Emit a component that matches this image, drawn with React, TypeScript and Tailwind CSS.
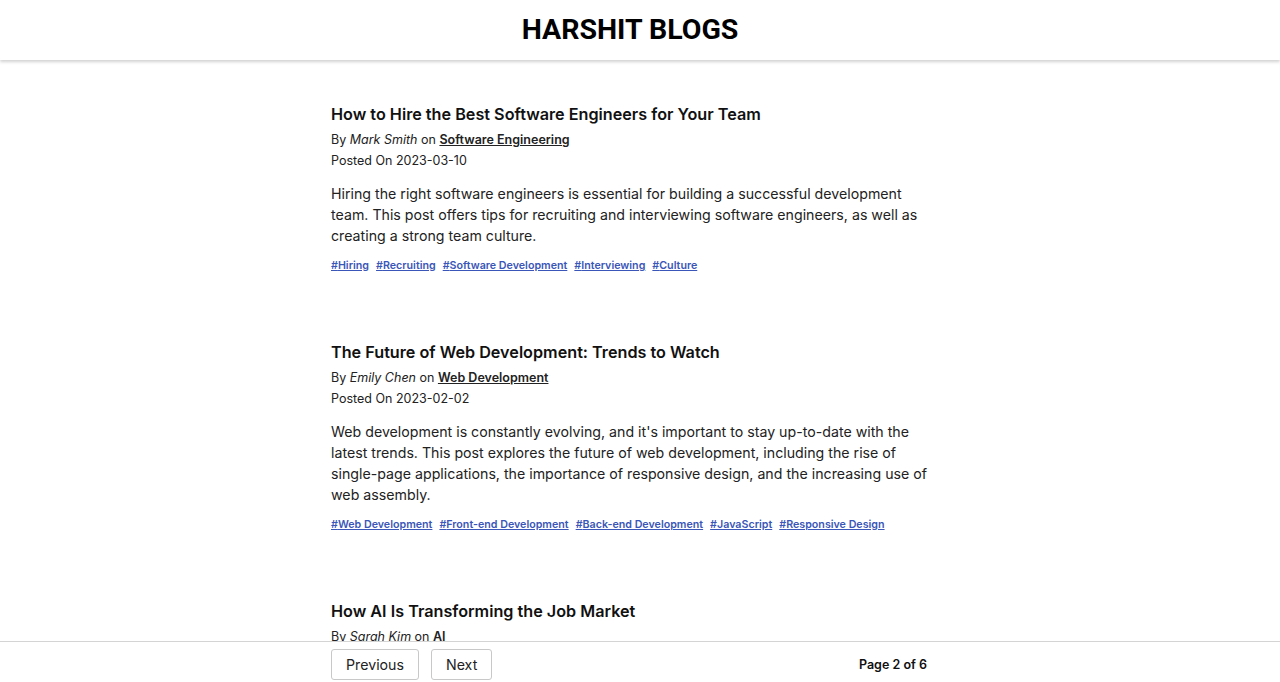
import React from 'react';

interface Post {
  title: string;
  author: string;
  category: string;
  date: string;
  body: string;
  tags: string[];
}

const posts: Post[] = [
  {
    title: 'How to Hire the Best Software Engineers for Your Team',
    author: 'Mark Smith',
    category: 'Software Engineering',
    date: '2023-03-10',
    body: 'Hiring the right software engineers is essential for building a successful development team. This post offers tips for recruiting and interviewing software engineers, as well as creating a strong team culture.',
    tags: ['Hiring', 'Recruiting', 'Software Development', 'Interviewing', 'Culture'],
  },
  {
    title: 'The Future of Web Development: Trends to Watch',
    author: 'Emily Chen',
    category: 'Web Development',
    date: '2023-02-02',
    body: "Web development is constantly evolving, and it's important to stay up-to-date with the latest trends. This post explores the future of web development, including the rise of single-page applications, the importance of responsive design, and the increasing use of web assembly.",
    tags: ['Web Development', 'Front-end Development', 'Back-end Development', 'JavaScript', 'Responsive Design'],
  },
  {
    title: 'How AI Is Transforming the Job Market',
    author: 'Sarah Kim',
    category: 'AI',
    date: '2023-01-15',
    body: 'Artificial intelligence is changing the way we work. This post looks at the jobs most affected by automation and the new roles that are emerging as a result.',
    tags: ['AI', 'Jobs', 'Automation', 'Future of Work'],
  },
];

function PostCard({ post }: { post: Post }) {
  return (
    <article className="mb-[66px]">
      <h2 className="text-[16.2px] leading-[24px] font-semibold text-[#111]">{post.title}</h2>
      <p className="mt-[3px] text-[12.5px] leading-[21px] text-[#222]">
        By <em className="italic">{post.author}</em> on{' '}
        <a href="#" className="font-semibold underline">{post.category}</a>
      </p>
      <p className="text-[12.5px] leading-[21px] text-[#222]">Posted On {post.date}</p>
      <p className="mt-[12px] text-[14.2px] leading-[21px] text-[#222]">{post.body}</p>
      <div className="mt-[12px] flex flex-wrap gap-x-[7px] text-[10.7px] leading-[16px] font-semibold">
        {post.tags.map((tag) => (
          <a key={tag} href="#" className="text-[#3a56b8] underline">#{tag}</a>
        ))}
      </div>
    </article>
  );
}

export default function App() {
  return (
    <div className="h-[682px] flex flex-col bg-white" style={{ fontFamily: 'Inter, "Noto Sans", sans-serif' }}>
      <header className="relative z-10 h-[60px] shrink-0 bg-white shadow-[0_2px_3px_rgba(0,0,0,0.18)] flex items-center justify-center pr-[20px]">
        <h1 className="text-[28.5px] font-bold text-black" style={{ fontFamily: 'Roboto, sans-serif' }}>
          HARSHIT BLOGS
        </h1>
      </header>

      <main className="flex-1 min-h-0 overflow-y-auto [scrollbar-width:none] pt-[42px] pr-[20px]">
        <div className="mx-auto w-[598px]">
          {posts.map((p) => (
            <PostCard key={p.title} post={p} />
          ))}
        </div>
      </main>

      <footer className="h-[41px] shrink-0 bg-white border-t border-[#d4d4d4] pr-[20px]">
        <div className="mx-auto w-[598px] h-full flex items-start justify-between pt-[7px]">
          <div className="flex gap-[12px]">
            <button className="h-[31px] px-[14px] border border-[#c8c8c8] rounded-[3px] text-[14.2px] text-[#222] bg-white">
              Previous
            </button>
            <button className="h-[31px] px-[14px] border border-[#c8c8c8] rounded-[3px] text-[14.2px] text-[#222] bg-white">
              Next
            </button>
          </div>
          <span className="mt-[7px] text-[12.5px] font-semibold text-[#111] pr-[2px]">Page 2 of 6</span>
        </div>
      </footer>
    </div>
  );
}
